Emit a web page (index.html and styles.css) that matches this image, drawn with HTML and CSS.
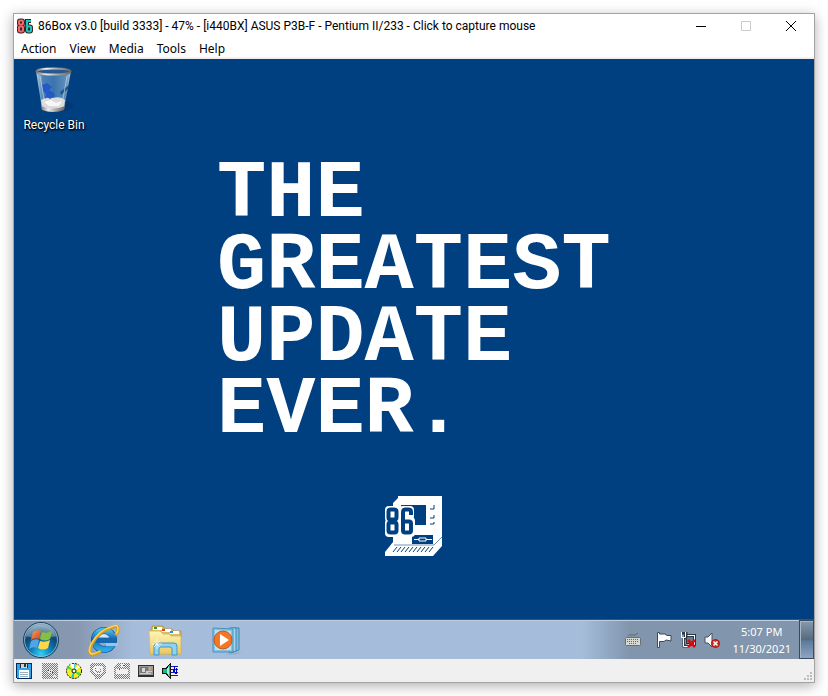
FILE: index.html
```html
<!DOCTYPE html>
<html lang="en">
<head>
<meta charset="utf-8">
<title>86Box v3.0</title>
<link rel="stylesheet" href="styles.css">
</head>
<body>
<main class="window">
  <header class="titlebar">
    <svg class="app-icon" viewBox="0 0 16 16" aria-hidden="true" fill="none">
      <g stroke="#3b2226" stroke-width="4"><rect x="2" y="2.500" width="4" height="4" rx="1"/><rect x="2" y="8.500" width="4" height="5" rx="1"/><rect x="10" y="8.500" width="4" height="5" rx="1"/><path d="M10 8V3H14"/></g>
      <g stroke="#f46a6a" stroke-width="2"><rect x="2" y="2.500" width="4" height="4" rx="1"/><rect x="2" y="8.500" width="4" height="5" rx="1"/></g>
      <g stroke="#19c9c1" stroke-width="2"><rect x="10" y="8.500" width="4" height="5" rx="1"/><path d="M10 8V3H14"/></g>
    </svg>
    <h1 class="title">86Box v3.0 [build 3333] - 47% - [i440BX] ASUS P3B-F - Pentium II/233 - Click to capture mouse</h1>
    <div class="controls">
      <button class="control" aria-label="Minimize"><svg viewBox="0 0 10 10"><path d="M0 5.500H10"/></svg></button>
      <button class="control" aria-label="Maximize" disabled><svg viewBox="0 0 10 10"><path d="M.5.5h9v9h-9z"/></svg></button>
      <button class="control" aria-label="Close"><svg viewBox="0 0 10 10"><path d="M0 0L10 10M10 0L0 10"/></svg></button>
    </div>
  </header>
  <nav class="menubar">
    <button>Action</button><button>View</button><button>Media</button><button>Tools</button><button>Help</button>
  </nav>

  <section class="screen">
    <div class="desktop">
      <div class="wallpaper">
        <p class="slogan">THE<br>GREATEST<br>UPDATE<br>EVER.</p>
        <svg class="logo" viewBox="0 0 60 62" aria-hidden="true">
          <path fill="#fff" d="M14 1H58V51L49 61H1V57L9 47V8L14 3Z"/>
          <path fill="#004080" d="M17 10H42V30H17zM28 40H49V49H28z"/>
          <path stroke="#6f93b7" fill="none" d="M10 50H50L58 42"/>
          <path stroke="#004080" fill="none" d="M50 10V14H46M50 20V23H46M50 27V29H46"/>
          <path stroke="#fff" fill="none" d="M30 44.500H35M42 44.500H48M35 43H42V46H35z"/>
          <path stroke="#004080" fill="none" d="M9 57L13 52M13 57L17 52M17 57L21 52M21 57L25 52M25 57L29 52M29 57L33 52M33 57L37 52M37 57L41 52M41 57L45 52M45 57L49 52"/>
          <g fill="#fff"><rect x="1" y="11" width="16" height="16" rx="4"/><rect x="1" y="24" width="16" height="18" rx="4"/><rect x="15" y="11" width="15" height="14" rx="4"/><rect x="15" y="22" width="16" height="20" rx="4"/></g>
          <g fill="#fff" stroke="#004080" stroke-width="4"><rect x="4.500" y="14.500" width="8" height="10" rx="2"/><rect x="4.500" y="27.500" width="8" height="10" rx="2"/><rect x="19" y="26.500" width="8" height="11" rx="2"/><path fill="none" d="M19 29V17Q19 14.500 21.500 14.500H25Q27 14.500 27 17V20"/></g>
        </svg>
      </div>
      <a class="shortcut" href="#bin">
        <svg class="bin" viewBox="0 0 40 46" aria-hidden="true">
          <defs>
            <linearGradient id="glass"><stop offset="0" stop-color="#b8cee0"/><stop offset=".2" stop-color="#4b80b4"/><stop offset=".5" stop-color="#3b74ad"/><stop offset=".85" stop-color="#5d8dba"/><stop offset="1" stop-color="#b5c9db"/></linearGradient>
            <linearGradient id="steel"><stop offset="0" stop-color="#777"/><stop offset=".3" stop-color="#eee"/><stop offset=".6" stop-color="#aaa"/><stop offset="1" stop-color="#666"/></linearGradient>
          </defs>
          <ellipse cx="30" cy="39" rx="9" ry="5" fill="#002f63" opacity=".5"/>
          <path d="M2 4L8 42Q19 47 30 42L37 4Z" fill="url(#glass)"/>
          <path d="M7 33Q11 30 19 31Q27 29 31 33L30 41Q19 46 8 41Z" fill="#dcdcdc"/>
          <path d="M10 35L17 33L22 36L28 34L25 39L15 39Z" fill="#f7f7f7"/>
          <path d="M8 18L13 16L18 20L15 23L20 26L21 29L16 32L13 30L11 32L12 27L9 24Z" fill="#2459c7"/>
          <path d="M26 25L35 18L34 22L27 28Z" fill="#1c568f"/>
          <path d="M7 39Q19 44 31 39L30 43Q19 47 8 43Z" fill="url(#steel)"/>
          <ellipse cx="19.500" cy="4.500" rx="17" ry="3" fill="#28598e" stroke="url(#steel)" stroke-width="2"/>
          <path d="M6 9L10 32M33 9L29 32" stroke="#d5e4ee" opacity=".6"/>
        </svg>
        <span>Recycle Bin</span>
      </a>
    </div>

    <footer class="taskbar">
      <button class="task start" aria-label="Start">
        <svg viewBox="0 0 38 38">
          <defs>
            <radialGradient id="orb" cx=".5" cy=".9" r=".9"><stop offset="0" stop-color="#35cff4"/><stop offset=".35" stop-color="#087bb5"/><stop offset=".65" stop-color="#12456e"/><stop offset="1" stop-color="#8fafc4"/></radialGradient>
            <linearGradient id="flagRed" x2="1" y2="1"><stop stop-color="#f8a361"/><stop offset="1" stop-color="#d9390f"/></linearGradient>
          </defs>
          <circle cx="19" cy="19" r="17.500" fill="url(#orb)" stroke="#164260"/>
          <circle cx="19" cy="19" r="16.500" fill="none" stroke="#a5cbdd" opacity=".7"/>
          <path d="M4 15A15.500 15.500 0 0 1 34 15Q19 20 4 15Z" fill="#fff" opacity=".28"/>
          <path d="M11 11Q15 8 19 10L17 18Q13 16 9 19Z" fill="url(#flagRed)"/>
          <path d="M20 11Q25 13 30 10L28 18Q23 21 18 18Z" fill="#84c13f"/>
          <path d="M9 20Q13 17 17 19L15 27Q11 25 7 28Z" fill="#55a3e5"/>
          <path d="M18 20Q23 22 28 19L26 27Q21 30 16 27Z" fill="#ffd64a"/>
        </svg>
      </button>
      <button class="task" aria-label="Internet Explorer">
        <svg viewBox="0 0 38 38">
          <defs><linearGradient id="ie" x2="0" y2="1"><stop stop-color="#46b9ee"/><stop offset=".45" stop-color="#1267ae"/><stop offset="1" stop-color="#2aa9e8"/></linearGradient></defs>
          <circle cx="20" cy="19" r="9.500" fill="none" stroke="#0c4b89" stroke-width="7"/>
          <circle cx="20" cy="19" r="9.500" fill="none" stroke="url(#ie)" stroke-width="6"/>
          <path d="M12 17H32V22H12Z" fill="#1568b1"/>
          <path d="M22 22H34V25H22Z" fill="#a7c0de"/>
          <path d="M15 16Q20 10 25 16Z" fill="#d6e7f5"/>
          <path d="M27 7Q34 3 34 8Q34 12 31 14M27 7Q16 9 8 23Q3 34 9 34Q13 33 17 30" fill="none" stroke="#d69b1b" stroke-width="3"/>
          <path d="M27 6Q34 2 34 8Q34 11 32 13M27 6Q15 9 7 23Q3 33 9 33Q13 32 16 30" fill="none" stroke="#ffd34c" stroke-width="1.500"/>
        </svg>
      </button>
      <button class="task" aria-label="Windows Explorer">
        <svg viewBox="0 0 38 38">
          <defs><linearGradient id="folder" x2="0" y2="1"><stop stop-color="#fff5b5"/><stop offset="1" stop-color="#e8c865"/></linearGradient></defs>
          <path d="M6 7V5H17L19 8H26L28 10H35V33H4V10Z" fill="#dcbc62" stroke="#b9984b"/>
          <path d="M7 6H16V9H7zM16 8H25V11H16zM24 10H33V13H24z" fill="#fff"/>
          <path d="M8 6H11V8H8z" fill="#21a32e"/><path d="M16 8H19V10H16z" fill="#d7422c"/><path d="M24 10H27V12H24z" fill="#278fdf"/>
          <path d="M3 10H14L17 13H23L25 15H35V33H4Z" fill="url(#folder)" stroke="#d9bd69"/>
          <path d="M8 34V25Q8 22 11 22H28Q31 22 31 25V34H26V28Q26 26 24 26H15Q13 26 13 28V34Z" fill="#8fd2ef" stroke="#4796bd"/>
          <path d="M11 18V28M6 23H16M8 20L14 26M14 20L8 26" stroke="#fff" stroke-width=".7"/>
        </svg>
      </button>
      <button class="task" aria-label="Media Player">
        <svg viewBox="0 0 38 38">
          <path d="M26 32L34 31L30 33L16 34Z" fill="#7e9dc0" opacity=".5"/>
          <path d="M23 7H31V29L23 32Z" fill="#7ebbdc" stroke="#3f83b0"/>
          <path d="M21 7H28V30L21 32Z" fill="#a5d5ec" stroke="#4389b5"/>
          <path d="M5 7L25 8V31L5 31Z" fill="#81c2e2" stroke="#4b91bc"/>
          <path d="M7 9L23 10V29L7 29Z" fill="#bce2f3"/>
          <circle cx="15" cy="19" r="9" fill="#f47722" stroke="#c8561a"/>
          <path d="M12 13V25L21 19Z" fill="#fff"/>
        </svg>
      </button>

      <div class="tray">
        <svg class="tray-icon keyboard" viewBox="0 0 16 16"><path d="M3 4Q4 2 7 3T13 1" stroke="#626970" fill="none"/><rect x=".5" y="5.500" width="15" height="8" rx="1" fill="#d8d8d2" stroke="#686e74"/><path d="M2 7.500H14M2 9.500H14M4 11.500H12" stroke="#666" stroke-dasharray="1 1"/></svg>
        <svg class="tray-icon" viewBox="0 0 16 16"><path d="M1.500 0.500V15.500H3.500V9.500H8L10 8L15 9V3.500H11L9 2L3.500 2V.500Z" fill="#fff" stroke="#3e4a58"/></svg>
        <svg class="tray-icon" viewBox="0 0 16 16"><rect x="5.500" y="3.500" width="9" height="9" fill="#64788f" stroke="#29343f" stroke-width="3"/><rect x="5.500" y="3.500" width="9" height="9" fill="none" stroke="#fff"/><path d="M1 1H6V5L4 7V14H8" fill="none" stroke="#303943" stroke-width="3"/><path d="M1.500 0V5.500H5.500V0M3.500 6V14.500H8" fill="none" stroke="#fff"/><path d="M8 8L15 15M15 8L8 15" stroke="#d60d0d" stroke-width="2.500"/></svg>
        <svg class="tray-icon" viewBox="0 0 16 16"><path d="M1 5H4L8 1V15L4 11H1Z" fill="#f7f7f7" stroke="#475362"/><circle cx="11.500" cy="11.500" r="4" fill="#d92b24" stroke="#a31616"/><path d="M9.500 9.500L13.500 13.500M13.500 9.500L9.500 13.500" stroke="#fff" stroke-width="1.500"/></svg>
        <time class="clock">5:07 PM<br>11/30/2021</time>
        <button class="peek" aria-label="Show desktop"></button>
      </div>
    </footer>
  </section>

  <footer class="statusbar">
    <svg class="floppy" viewBox="0 0 16 16" shape-rendering="crispEdges"><path d="M0 0H15L16 1V16H1L0 15Z" fill="#002b5c"/><path d="M1 1H15V15H1Z" fill="#2fa5ee"/><path d="M3 7H13V15H3Z" fill="#fff"/><path d="M4 9H12V10H4zM4 11H12V12H4zM4 13H12V14H4z" fill="#9dafbd"/><path d="M4 0H12V5H4Z" fill="#252b30"/><path d="M5 1H11V5H5Z" fill="#ccd1d4"/><path d="M8 1H10V4H8Z" fill="#333"/></svg>
    <svg viewBox="0 0 16 16" shape-rendering="crispEdges"><defs><pattern id="dither" width="2" height="2" patternUnits="userSpaceOnUse"><path d="M0 0H1V1H0zM1 1H2V2H1z" fill="#777"/></pattern></defs><path d="M0 0H16V16H0z" fill="url(#dither)"/><path d="M6 7H10V10H6zM11 12H14V14H11z" fill="#e5e5e5"/><path d="M8 8H9V9H8zM6 7H7V8H6zM10 9H11V10H10z" fill="#444"/></svg>
    <svg viewBox="0 0 16 16"><circle cx="8" cy="8" r="7.500" fill="#f2f21a" stroke="#111" stroke-dasharray="2 1"/><path d="M8 8L4 1L8 1Z" fill="#fff"/><path d="M8 8L1 5L2 3Z" fill="#24d24b"/><path d="M8 8L12 2L14 4Z" fill="#fff"/><path d="M8 8L15 10L13 13Z" fill="#45d952"/><path d="M8 8L8 15L5 14Z" fill="#24b9d8"/><path d="M8 8L8 1L10 1Z" fill="#37d4dd"/><circle cx="8" cy="8" r="2" fill="#fff" stroke="#111"/></svg>
    <svg viewBox="0 0 16 16" shape-rendering="crispEdges"><path d="M2 0H14L16 3V9L12 14H11V16H5V14H4L0 9V3Z" fill="url(#dither)"/><path d="M4 3H12V4H13V9L11 11H5L3 9V4H4Z" fill="#f0f0f0"/><path d="M5 5H11V8L9 10H7L5 8Z" fill="url(#dither)"/><path d="M6 5H10V8H6Z" fill="#f0f0f0"/></svg>
    <svg viewBox="0 0 16 16" shape-rendering="crispEdges"><path d="M4 0H16V16H0V4Z" fill="url(#dither)"/><path d="M2 6H14V11H2zM7 1H10V4H7z" fill="#f0f0f0"/><path d="M9 2H11V3H9zM5 6H6V7H5z" fill="#555"/></svg>
    <svg viewBox="0 0 16 16" shape-rendering="crispEdges"><path d="M0 2H16V14H0z" fill="#303030"/><path d="M1 3H15V12H1z" fill="#999"/><path d="M2 4H10V11H2z" fill="#777"/><path d="M4 5H7V9H4zM8 8H10V10H8z" fill="#d6d6d6"/><path d="M11 4H13V7H11z" fill="#e6a92d"/><path d="M10 8H14V9H10zM2 10H13V11H2z" fill="#ccc"/></svg>
    <svg viewBox="0 0 16 16" shape-rendering="crispEdges"><path d="M9 3H16V4H9zM9 6H16V7H9zM9 9H16V10H9zM9 12H16V13H9z" fill="#1212e8"/><path d="M12 3H13V8H12zM11 7H13V9H11zM14 5H15V11H14zM13 9H15V11H13z" fill="#0000a8"/><path d="M.5 5.500H4L8.500.500V15.500L4 10.500H.5Z" fill="#19ba87" stroke="#111"/><path d="M5 5L7 3V13L5 10Z" fill="#9df1d1"/></svg>
    <svg class="grip" viewBox="0 0 8 8" shape-rendering="crispEdges"><path d="M6 0H8V2H6zM3 3H5V5H3zM6 3H8V5H6zM0 6H2V8H0zM3 6H5V8H3zM6 6H8V8H6z" fill="#bcbcbc"/></svg>
  </footer>
</main>
</body>
</html>
```
FILE: styles.css
```css
* { box-sizing: border-box; }

body {
  margin: 0;
  padding: 13px;
  background: #fff;
  font: 12px/16px "Noto Sans", "Open Sans", sans-serif;
  color: #000;
}

button {
  border: 0;
  padding: 0;
  background: none;
  font: inherit;
  color: inherit;
}

svg { display: block; }

.window {
  border: 1px solid #a3a3a3;
  background: #fff;
  box-shadow: 0 3px 12px rgba(0, 0, 0, .32);
}

.titlebar {
  display: flex;
  align-items: center;
  height: 24px;
  padding: 0 1px 0 3px;
}

.app-icon { width: 16px; height: 16px; }

.title {
  flex: 1;
  min-width: 0;
  margin: 0 0 0 5px;
  font-family: Roboto, sans-serif;
  font-size: 12px;
  font-weight: 400;
  white-space: nowrap;
  overflow: hidden;
}

.controls { display: flex; }

.control {
  display: grid;
  place-items: center;
  width: 45px;
  height: 24px;
}

.control svg {
  width: 10px;
  height: 10px;
  fill: none;
  stroke: #000;
}

.control:disabled svg { stroke: #ccc; }

.menubar {
  display: flex;
  gap: 13px;
  height: 21px;
  padding: 2px 0 0 7px;
  border-bottom: 2px solid #f0f0f0;
}

.screen {
  display: flex;
  flex-direction: column;
  aspect-ratio: 4 / 3;
  background: #004080;
}

.desktop {
  display: grid;
  flex: 1;
}

.wallpaper,
.shortcut { grid-area: 1 / 1; }

.wallpaper {
  display: flex;
  flex-direction: column;
  align-items: center;
  gap: 48px;
  padding-top: 100px;
}

.slogan {
  width: 394px;
  margin: 0;
  color: #fff;
  font: bold 82px/72px "Liberation Mono", monospace;
}

.logo { width: 60px; height: 62px; }

.shortcut {
  display: flex;
  flex-direction: column;
  align-items: center;
  align-self: start;
  gap: 4px;
  width: 80px;
  padding-top: 8px;
  color: #fff;
  font-family: Roboto, sans-serif;
  text-decoration: none;
  text-shadow: 1px 1px 2px #000, 0 1px 2px #000;
}

.bin { width: 40px; height: 46px; }

.taskbar {
  display: flex;
  align-items: center;
  height: 40px;
  padding-left: 8px;
  border-top: 1px solid #34546f;
  background: linear-gradient(to right, #8295ac, #8798b0 8%, #a5bddb 15%, #a5bddb 71%, #8195ac 77%);
  box-shadow: inset 0 1px #bdcddd;
}

.task {
  width: 38px;
  height: 38px;
  margin-right: 24px;
}

.task svg { width: 38px; height: 38px; }

.tray {
  display: flex;
  align-items: center;
  align-self: stretch;
  gap: 8px;
  margin-left: auto;
  color: #fff;
}

.tray-icon { width: 16px; height: 16px; }

.keyboard { margin-right: 7px; }

.clock {
  margin-left: 4px;
  font-size: 11px;
  line-height: 17px;
  text-align: center;
}

.peek {
  align-self: stretch;
  width: 15px;
  border: 1px solid #394b60;
  background: linear-gradient(to bottom, #8799ad, #566a80 50%, #5e7b9c 55%, #8da4c0);
  box-shadow: inset 1px 1px #a8b7c7;
}

.statusbar {
  display: flex;
  align-items: center;
  gap: 8px;
  height: 23px;
  padding: 0 2px;
  background: #f0f0f0;
}

.statusbar svg { width: 16px; height: 16px; }

.statusbar .floppy { margin-right: 2px; }

.statusbar .grip {
  align-self: flex-end;
  width: 8px;
  height: 8px;
  margin: 0 0 2px auto;
}
```
